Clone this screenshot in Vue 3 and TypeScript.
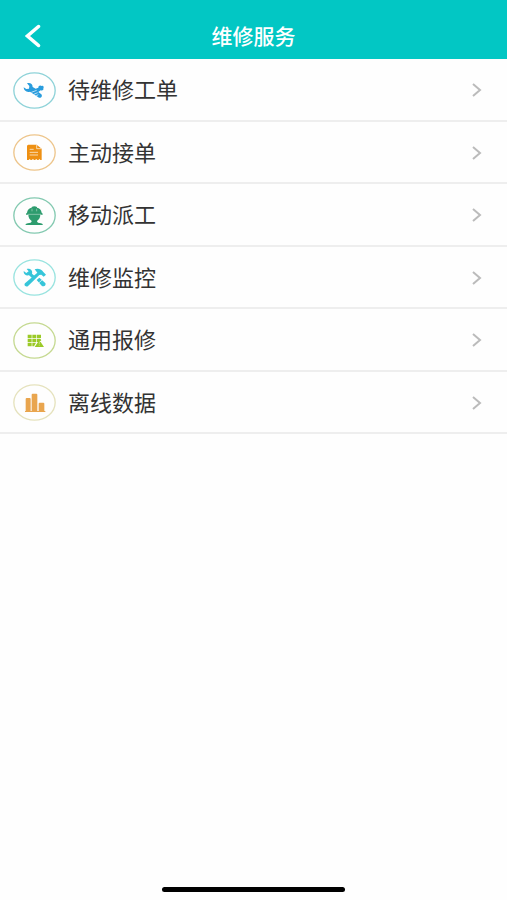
<script setup lang="ts">
type IconName = 'wrench' | 'order' | 'worker' | 'tools' | 'report' | 'chart'

interface MenuItem {
  label: string
  icon: IconName
}

const items: MenuItem[] = [
  { label: '待维修工单', icon: 'wrench' },
  { label: '主动接单', icon: 'order' },
  { label: '移动派工', icon: 'worker' },
  { label: '维修监控', icon: 'tools' },
  { label: '通用报修', icon: 'report' },
  { label: '离线数据', icon: 'chart' },
]
</script>

<template>
  <div class="page">
    <header class="header">
      <button class="back" type="button" aria-label="返回">
        <svg class="back-icon" viewBox="0 0 16 24" aria-hidden="true">
          <path d="M13.5 2.5 2.5 12l11 9.5" />
        </svg>
      </button>
      <h1 class="title">维修服务</h1>
    </header>

    <main class="content">
      <nav class="menu">
        <a v-for="item in items" :key="item.icon" class="row" href="#">
          <svg class="badge" :class="item.icon" viewBox="0 0 129 111" aria-hidden="true">
            <ellipse class="ring" cx="64.5" cy="55.5" rx="62" ry="53" />
            <g v-if="item.icon === 'wrench'">
              <path class="fill" d="M42 34c9-3 17 2 17 11l9 5 8-3c0-6 6-9 10-5 5-2 8 4 5 7 2 5-3 8-8 6l-7 5 8 6c6 5 1 13-6 11l-27-18c-10 3-19-3-19-13l8 5 8-1 1-8z" />
              <path class="thin" d="m55 61 16-6M62 67l12-5M67 73l9-5" />
            </g>
            <g v-else-if="item.icon === 'order'">
              <path class="fill" d="M46 32h25l15 12v34h-4l-2-3-4 3h-3l-3-3-4 3h-3l-3-3-4 3h-3l-3-3-3 3h-5V37q0-5 4-5z" />
              <path class="thin" d="M71 33v11h14M50 46h12M50 55h25M50 63h25" />
            </g>
            <g v-else-if="item.icon === 'worker'">
              <path class="fill" d="M42 47c1-9 7-14 14-15v-2q8-4 16 0v2c7 1 13 6 14 15l3 3v3H39v-3zM46 52h36c0 11-4 16-10 20 0 5 5 6 12 7l5 2v3H38v-3l6-2c7-1 12-2 12-7-6-4-10-9-10-20z" />
              <path class="faint" d="M57 35v8M71 35v8M44 52h40" />
            </g>
            <g v-else-if="item.icon === 'tools'">
              <path class="fill" d="M41 30c11-3 19 5 16 14l8 7-7 7-10-9c-9 2-17-3-16-13l8 6 7-5zM65 31c10-4 20 0 26 8l8 8-7 6-7-6-6 1-33 32c-6 6-15 0-10-7l37-32zM71 63l8-7 17 15c6 6-4 15-10 9z" />
              <path class="thin" d="m75 74 12-11" />
            </g>
            <g v-else-if="item.icon === 'report'">
              <path class="fill" d="M44 38h12v10H44zM58 38h12v10H58zM72 38h12v10H72zM44 50h12v10H44zM58 50h12v10H58zM72 50h10l3 5-6 5h-7zM44 62h12v11H44zM58 62h11l-6 11h-5zM79 54l14 21H65z" />
              <path class="faint" d="M79 60v7M79 69v2" />
            </g>
            <g v-else class="fill">
              <path d="M36 81h61v3H36zM38 45q0-3 3-3h9q3 0 3 3v36H38zM56 32q0-3 3-3h11q3 0 3 3v49H56zM77 59q0-3 3-3h11q3 0 3 3v22H77z" />
            </g>
          </svg>
          <span class="label">{{ item.label }}</span>
          <svg class="chevron" viewBox="0 0 10 14" aria-hidden="true">
            <path d="m1 1 7 6-7 6" />
          </svg>
        </a>
      </nav>
    </main>

    <footer class="footer">
      <div class="home-bar"></div>
    </footer>
  </div>
</template>

<style>
body {
  margin: 0;
  background: #fefefe;
}
</style>

<style scoped>
.page {
  display: flex;
  flex-direction: column;
  min-height: 100vh;
  background: #fefefe;
  color: #333;
  font-family: "Noto Sans CJK SC", "Noto Sans", sans-serif;
}

.header {
  display: grid;
  grid-template-columns: 64px 1fr 64px;
  align-items: center;
  box-sizing: border-box;
  height: 59px;
  padding-top: 13px;
  background: #02c7c4;
  color: #fff;
}

.back {
  display: flex;
  align-items: center;
  height: 44px;
  padding: 0 0 0 25px;
  border: 0;
  background: transparent;
  cursor: pointer;
}

.back-icon {
  width: 16px;
  height: 24px;
  fill: none;
  stroke: #fff;
  stroke-width: 3.5;
  stroke-linecap: round;
}

.title {
  margin: 0;
  padding-bottom: 2px;
  font-size: 21px;
  font-weight: 500;
  line-height: 24px;
  text-align: center;
}

.content {
  flex: 1;
}

.menu {
  display: grid;
  grid-auto-rows: 1fr;
  min-height: 375px;
}

.row {
  display: flex;
  align-items: center;
  gap: 12px;
  padding: 2px 25px 0 13px;
  border-bottom: 2px solid #eee;
  color: inherit;
  text-decoration: none;
}

.badge {
  width: 43px;
  height: 37px;
  flex: none;
}

.ring {
  fill: none;
  stroke-width: 4;
}

.fill {
  fill: var(--ink);
}

.thin,
.faint {
  fill: none;
  stroke: #fff;
  stroke-width: 2;
}

.faint {
  stroke-opacity: 0.6;
}

.wrench {
  --ink: #299cdd;
}

.wrench .ring {
  stroke: #8ed2d8;
}

.order {
  --ink: #ee9013;
}

.order .ring {
  stroke: #edc58b;
}

.worker {
  --ink: #2d9c6e;
}

.worker .ring {
  stroke: #83c9b0;
}

.tools {
  --ink: #36c5d9;
}

.tools .ring {
  stroke: #98e3df;
}

.report {
  --ink: #9bca27;
}

.report .ring {
  stroke: #c5d991;
}

.chart {
  --ink: #e9a54e;
}

.chart .ring {
  stroke: #e5e2bd;
}

.label {
  flex: 1;
  padding-bottom: 4px;
  font-size: 22px;
  line-height: 32px;
}

.chevron {
  width: 10px;
  height: 14px;
  fill: none;
  stroke: #bbb;
  stroke-width: 2;
}

.footer {
  display: flex;
  justify-content: center;
  padding-bottom: 8px;
}

.home-bar {
  width: 36%;
  height: 5px;
  border-radius: 3px;
  background: #000;
}
</style>
